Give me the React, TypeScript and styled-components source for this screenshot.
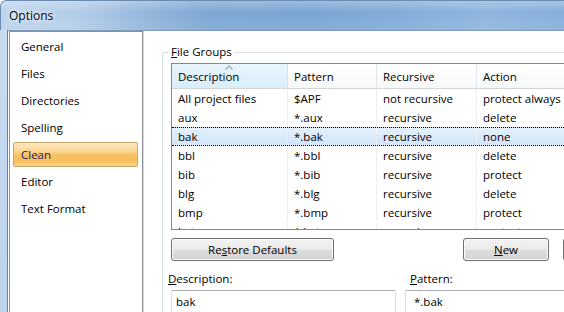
import React from 'react';
import styled, { createGlobalStyle } from 'styled-components';

const GlobalStyle = createGlobalStyle`
  html, body {
    margin: 0;
    padding: 0;
    background: #ffffff;
  }
  body {
    font-family: "Open Sans", "Liberation Sans", sans-serif;
    font-size: 11.5px;
    color: #000;
  }
`;

interface FileGroup {
  description: string;
  pattern: string;
  recursive: string;
  action: string;
}

const navItems = ['General', 'Files', 'Directories', 'Spelling', 'Clean', 'Editor', 'Text Format'];

const fileGroups: FileGroup[] = [
  { description: 'All project files', pattern: '$APF', recursive: 'not recursive', action: 'protect always' },
  { description: 'aux', pattern: '*.aux', recursive: 'recursive', action: 'delete' },
  { description: 'bak', pattern: '*.bak', recursive: 'recursive', action: 'none' },
  { description: 'bbl', pattern: '*.bbl', recursive: 'recursive', action: 'delete' },
  { description: 'bib', pattern: '*.bib', recursive: 'recursive', action: 'protect' },
  { description: 'blg', pattern: '*.blg', recursive: 'recursive', action: 'delete' },
  { description: 'bmp', pattern: '*.bmp', recursive: 'recursive', action: 'protect' },
  { description: 'bst', pattern: '*.bst', recursive: 'recursive', action: 'protect' },
];

const columns = [
  { key: 'description', label: 'Description', width: 116 },
  { key: 'pattern', label: 'Pattern', width: 89 },
  { key: 'recursive', label: 'Recursive', width: 100 },
  { key: 'action', label: 'Action', width: 150 },
] as const;

const SELECTED = 2;

export default function App() {
  return (
    <>
      <GlobalStyle />
      <Window>
        <TitleBar>
          <Title>Options</Title>
        </TitleBar>
        <Client>
          <NavBox>
            {navItems.map((item) => (
              <NavItem key={item} $active={item === 'Clean'}>
                {item}
              </NavItem>
            ))}
          </NavBox>

          <Main>
            <GroupFrame>
              <Legend>
                <u>F</u>ile Groups
              </Legend>

              <ListBox>
                <HeaderRow>
                  {columns.map((col, i) => (
                    <HeaderCell key={col.key} $width={col.width} $sorted={i === 0}>
                      {i === 0 && (
                        <SortArrow width="8" height="5" viewBox="0 0 8 5">
                          <path d="M0.5 4.5 L4 1 L7.5 4.5" fill="none" stroke="#97a9bf" strokeWidth="1.2" />
                        </SortArrow>
                      )}
                      {col.label}
                    </HeaderCell>
                  ))}
                </HeaderRow>
                <ListBody>
                  {fileGroups.map((row, r) => (
                    <Row key={row.description} $selected={r === SELECTED}>
                      {columns.map((col) => (
                        <Cell key={col.key} $width={col.width}>
                          {row[col.key]}
                        </Cell>
                      ))}
                    </Row>
                  ))}
                </ListBody>
              </ListBox>

              <ButtonRow>
                <PushButton $width={163} $spaceAfter={115}>
                  Re<u>s</u>tore Defaults
                </PushButton>
                <PushButton $width={86}>
                  <u>N</u>ew
                </PushButton>
                <PushButton $width={86}>
                  <u>D</u>elete
                </PushButton>
              </ButtonRow>

              <FieldsGrid>
                <Field>
                  <FieldLabel $shift={-3}>
                    <u>D</u>escription:
                  </FieldLabel>
                  <TextBox $width={225}>bak</TextBox>
                </Field>
                <Field>
                  <FieldLabel $shift={5}>
                    <u>P</u>attern:
                  </FieldLabel>
                  <TextBox $width={200} $padLeft={8}>*.bak</TextBox>
                </Field>
              </FieldsGrid>
            </GroupFrame>
          </Main>
        </Client>
      </Window>
    </>
  );
}

const Window = styled.div`
  width: 564px;
  height: 312px;
  overflow: hidden;
  display: flex;
  flex-direction: column;
  background: linear-gradient(to bottom, #c9dcf0, #bcd3ec);
  border-top-left-radius: 6px;
`;

const TitleBar = styled.div`
  height: 30px;
  flex: none;
  display: flex;
  align-items: center;
  padding-left: 8px;
  box-sizing: border-box;
  border-top: 1px solid #6b8cb0;
  border-left: 1px solid #6b8cb0;
  border-top-left-radius: 6px;
  background:
    linear-gradient(to bottom, rgba(255, 255, 255, 0.25), rgba(255, 255, 255, 0) 40%, rgba(255, 255, 255, 0.08)),
    linear-gradient(
      to right,
      #bdd4ec 0%,
      #b3cde8 14%,
      #98b9de 24%,
      #7ea8d3 36%,
      #7aa6d3 55%,
      #83add9 72%,
      #8fb6df 86%,
      #86afdb 100%
    );
`;

const Title = styled.span`
  font-size: 12px;
  line-height: 16px;
  margin-top: 1px;
  color: #000;
  text-shadow: 0 0 6px #fff, 0 0 3px #fff;
`;

const Client = styled.div`
  flex: 1;
  display: flex;
  align-items: flex-start;
  margin-left: 7px;
  background: #ffffff;
  border-top: 1px solid #7f9bb8;
  border-left: 1px solid #6d7f93;
  min-width: 0;
`;

const NavBox = styled.div`
  flex: none;
  width: 134px;
  height: 300px;
  margin-left: 1px;
  box-sizing: border-box;
  border: 1px solid #8e9095;
  box-shadow: 1px 0 0 #d8dadf;
  padding: 2px 4px 0 3px;
  display: flex;
  flex-direction: column;
  gap: 2px;
`;

const NavItem = styled.div<{ $active?: boolean }>`
  height: 25px;
  box-sizing: border-box;
  display: flex;
  align-items: center;
  padding-left: 7px;
  border: 1px solid ${(p) => (p.$active ? '#c6a66c' : 'transparent')};
  border-radius: 2px;
  color: ${(p) => (p.$active ? '#1b1b63' : '#000')};
  background: ${(p) =>
    p.$active
      ? 'linear-gradient(to bottom, #fde8c2 0%, #fcd796 35%, #f9bf5c 55%, #f9c163 80%, #fcd68c 100%)'
      : 'transparent'};
`;

const Main = styled.div`
  flex: none;
  margin-left: 19px;
`;

const GroupFrame = styled.div`
  position: relative;
  margin-top: 21px;
  width: 480px;
  height: 300px;
  box-sizing: border-box;
  border: 1px solid #d5dfe5;
  border-radius: 3px;
  padding: 10px 0 0 8px;
`;

const Legend = styled.span`
  position: absolute;
  top: -9px;
  left: 6px;
  padding: 0 2px 0 2px;
  background: #fff;
  line-height: 16px;
`;

const ListBox = styled.div`
  width: 440px;
  border: 1px solid #828790;
  background: #fff;
`;

const HeaderRow = styled.div`
  display: flex;
  height: 25px;
  box-sizing: border-box;
  border-bottom: 1px solid #d5d5d5;
  background: linear-gradient(to bottom, #ffffff, #f7f8f9);
`;

const HeaderCell = styled.div<{ $width: number; $sorted?: boolean }>`
  position: relative;
  flex: none;
  width: ${(p) => p.$width}px;
  box-sizing: border-box;
  padding-left: 6px;
  display: flex;
  align-items: center;
  border-right: 1px solid ${(p) => (p.$sorted ? '#c9e4f2' : '#e3e8ee')};
  background: ${(p) => (p.$sorted ? 'linear-gradient(to bottom, #e8f5fc, #d9eefa)' : 'transparent')};
`;

const SortArrow = styled.svg`
  position: absolute;
  top: 1px;
  left: 53px;
`;

const ListBody = styled.div`
  height: 140px;
  overflow: hidden;
`;

const Row = styled.div<{ $selected?: boolean }>`
  display: flex;
  height: 19px;
  box-sizing: border-box;
  border: 1px ${(p) => (p.$selected ? 'dotted #000' : 'solid transparent')};
  border-left: none;
  border-right: none;
  background: ${(p) => (p.$selected ? 'linear-gradient(to bottom, #e4f0fc, #d2e5f9)' : 'transparent')};
`;

const Cell = styled.div<{ $width: number }>`
  flex: none;
  width: ${(p) => p.$width}px;
  box-sizing: border-box;
  padding-left: 6px;
  display: flex;
  align-items: center;
  white-space: nowrap;
  overflow: hidden;
  border-right: 1px solid #eceef2;
`;

const ButtonRow = styled.div`
  display: flex;
  gap: 14px;
  margin-top: 8px;
`;

const PushButton = styled.button<{ $width: number; $spaceAfter?: number }>`
  flex: none;
  width: ${(p) => p.$width}px;
  height: 23px;
  margin-right: ${(p) => p.$spaceAfter ?? 0}px;
  padding: 0;
  font-family: inherit;
  font-size: inherit;
  color: #000;
  border: 1px solid #707070;
  border-radius: 3px;
  box-shadow: inset 0 0 0 1px #fbfbfb;
  background: linear-gradient(to bottom, #f3f3f3 0%, #ececec 48%, #dedede 52%, #d2d2d2 100%);
`;

const FieldsGrid = styled.div`
  display: grid;
  grid-template-columns: 225px 220px;
  column-gap: 9px;
  margin-top: 10px;
`;

const Field = styled.div`
  display: flex;
  flex-direction: column;
`;

const FieldLabel = styled.label<{ $shift: number }>`
  line-height: 16px;
  margin-left: ${(p) => p.$shift}px;
  margin-bottom: 3px;
`;

const TextBox = styled.div<{ $width: number; $padLeft?: number }>`
  width: ${(p) => p.$width}px;
  height: 23px;
  box-sizing: border-box;
  display: flex;
  align-items: center;
  padding-left: ${(p) => p.$padLeft ?? 4}px;
  border: 1px solid #dbdfe6;
  border-top-color: #abadb3;
  border-radius: 2px;
  background: #fff;
`;
